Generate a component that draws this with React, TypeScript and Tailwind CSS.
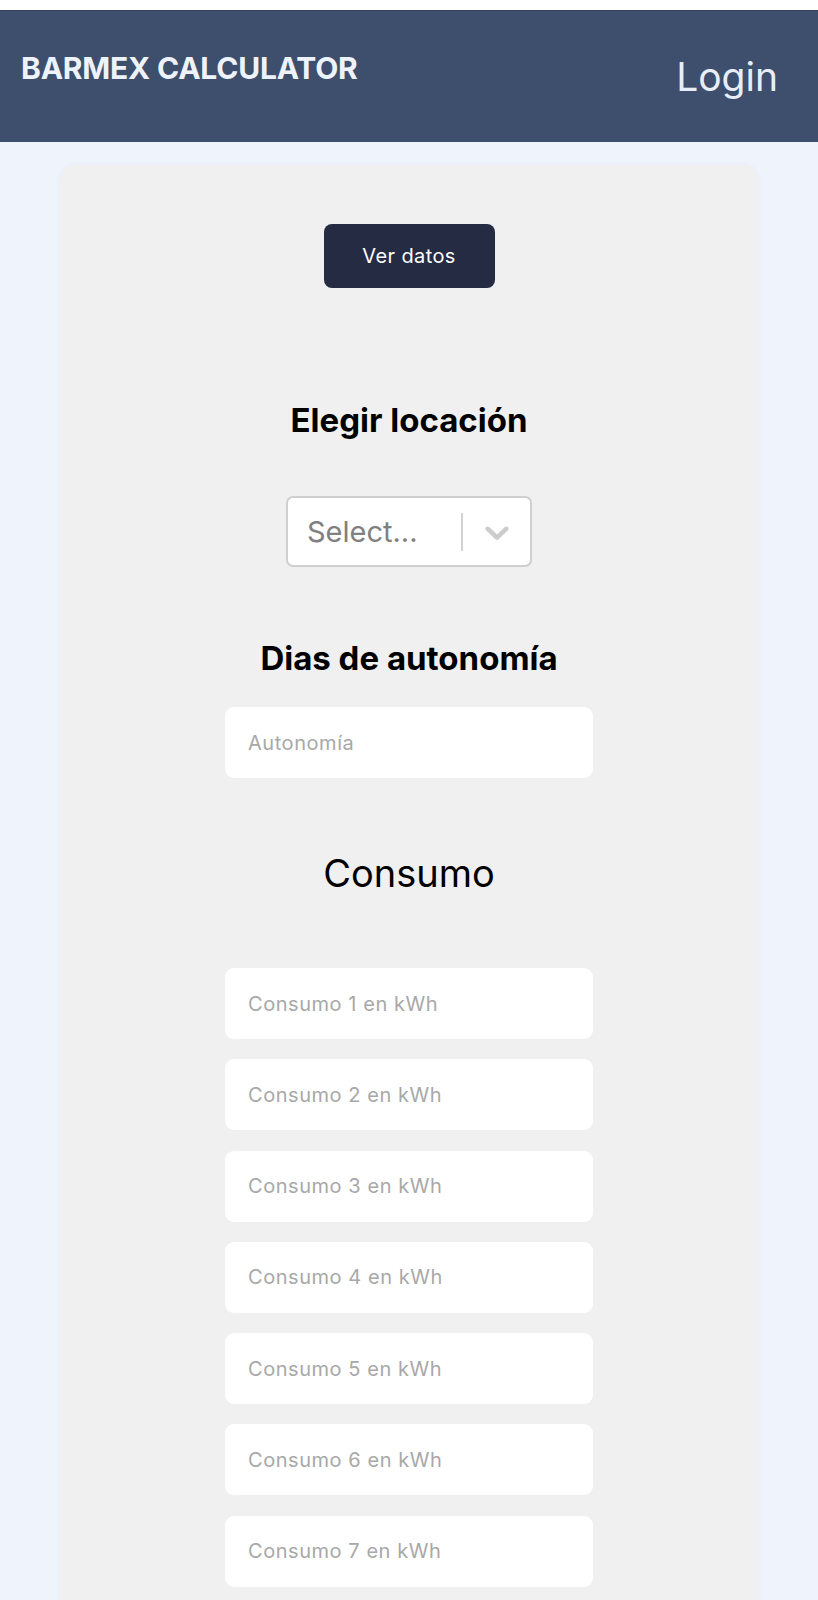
import React from "react";

const font = { fontFamily: 'Inter, "Noto Sans", "Liberation Sans", sans-serif' };

function Chevron() {
  return (
    <svg width="40" height="40" viewBox="0 0 20 20" aria-hidden="true" className="shrink-0">
      <path
        fill="#cccccc"
        d="M4.516 7.548c0.436-0.446 1.043-0.481 1.576 0l3.908 3.747 3.908-3.747c0.533-0.481 1.141-0.446 1.574 0 0.436 0.445 0.408 1.197 0 1.615-0.406 0.418-4.695 4.502-4.695 4.502-0.217 0.223-0.502 0.335-0.787 0.335s-0.57-0.112-0.789-0.335c0 0-4.287-4.084-4.695-4.502s-0.436-1.17 0-1.615z"
      />
    </svg>
  );
}

function Field({ placeholder }: { placeholder: string }) {
  return (
    <input
      type="text"
      placeholder={placeholder}
      className="w-[368px] h-[71px] rounded-[9px] bg-white px-[23px] text-[20px] tracking-[0.55px] text-black placeholder:text-[#a8a8a8] outline-none"
      style={font}
    />
  );
}

export default function App() {
  const consumos = Array.from({ length: 12 }, (_, i) => i + 1);
  return (
    <div className="min-h-screen bg-[#eff4fc]" style={font}>
      <div className="h-[10px] bg-white" />
      <header className="h-[132px] bg-[#3e4e6d] border-t border-[#34405a] flex items-start justify-between pl-[21px] pr-[40px] pt-[42px]">
        <div className="text-[30px] leading-none font-bold text-[#eef2fb] tracking-[-0.2px]">
          BARMEX CALCULATOR
        </div>
        <div className="text-[39px] leading-none font-normal text-[#e8eef9] mt-[4px]">Login</div>
      </header>

      <main className="pt-[23px]">
        <div className="mx-[60px] rounded-[16px] bg-[#f0f0f0] shadow-[0_0_6px_rgba(0,0,0,0.04)] flex flex-col items-center pt-[59px] pb-[60px]">
          <button className="w-[171px] h-[64px] rounded-[8px] bg-[#252b42] text-white text-[20px] leading-none tracking-[0.4px]">
            Ver datos
          </button>

          <h2 className="mt-[116px] text-[33px] leading-none font-bold text-black">Elegir locación</h2>

          <div className="mt-[59px] w-[246px] h-[71px] rounded-[7px] border-2 border-[#cfcfcf] bg-white flex items-center">
            <div className="flex-1 pl-[19px] text-[29px] leading-none text-[#808080]">Select...</div>
            <div className="w-[2px] h-[38px] bg-[#d2d2d2]" />
            <div className="pl-[14px] pr-[13px] flex items-center">
              <Chevron />
            </div>
          </div>

          <h2 className="mt-[75px] text-[33px] leading-none font-bold text-black">Dias de autonomía</h2>

          <div className="mt-[32px]">
            <Field placeholder="Autonomía" />
          </div>

          <h2 className="mt-[76px] text-[38px] leading-none font-normal text-black">Consumo</h2>

          <div className="mt-[76px] flex flex-col gap-[20.3px]">
            {consumos.map((n) => (
              <Field key={n} placeholder={`Consumo ${n} en kWh`} />
            ))}
          </div>
        </div>
      </main>
    </div>
  );
}
